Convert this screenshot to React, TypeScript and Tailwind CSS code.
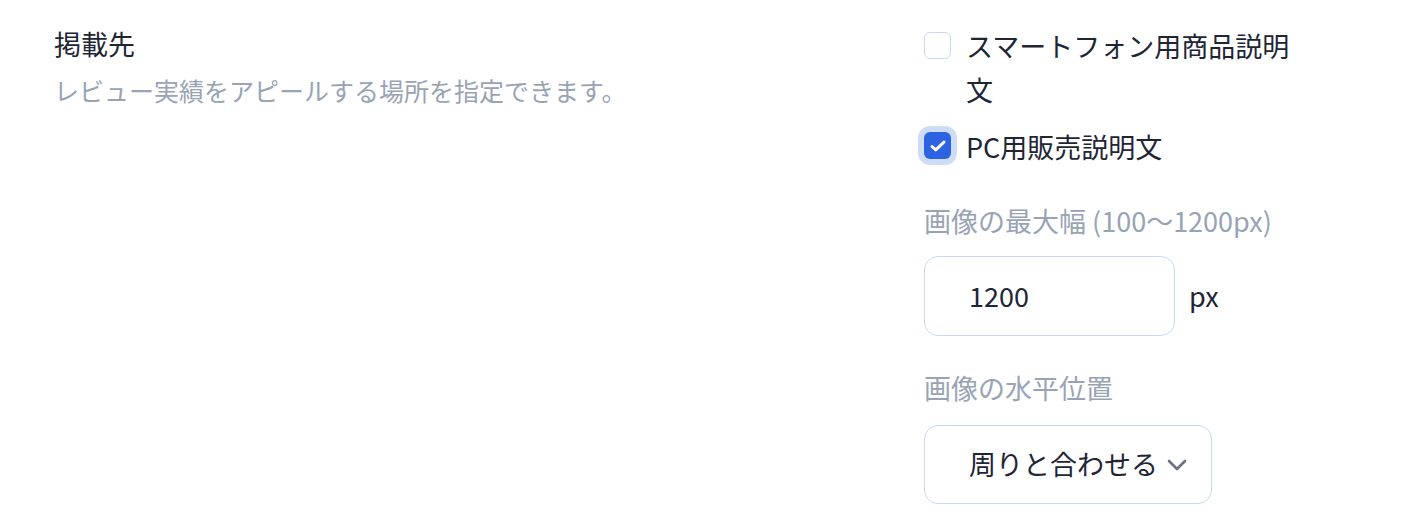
const font = { fontFamily: '"Noto Sans CJK JP", "Noto Sans", sans-serif' };

interface CheckRowProps {
    label: string;
    checked?: boolean;
}

const CheckRow: React.FC<CheckRowProps> = ({ label, checked }) => {
    return (
        <label className="flex items-start gap-[15px]">
            {checked ? (
                <span className="mt-[7px] flex h-[27px] w-[27px] shrink-0 items-center justify-center rounded-[6px] bg-[#2d62e3] ring-[6px] ring-[#cddcf7]">
                    <svg viewBox="0 0 18 18" className="h-[18px] w-[18px]" fill="none">
                        <path d="M3 9.5l3.8 3.4L15 5" stroke="white" strokeWidth="3" strokeLinecap="round" strokeLinejoin="round" />
                    </svg>
                </span>
            ) : (
                <span className="mt-[8px] h-[27px] w-[27px] shrink-0 rounded-[6px] border border-[#c3d9fb] bg-white" />
            )}
            <span className="text-[27px] leading-[44px] text-[#1e2535]">{label}</span>
        </label>
    );
};

export default function App() {
    return (
        <div className="flex min-h-[530px] bg-white pl-[54px] pt-[24px]" style={font}>
            <div className="w-[870px] shrink-0">
                <h3 className="text-[27px] leading-[40px] text-[#1e2535]">掲載先</h3>
                <p className="mt-[6px] text-[25px] leading-[40px] text-[#98a3b5]">
                    レビュー実績をアピールする場所を指定できます。
                </p>
            </div>
            <div className="w-[381px] shrink-0">
                <div className="flex flex-col gap-[13px]">
                    <CheckRow label="スマートフォン用商品説明文" />
                    <CheckRow label="PC用販売説明文" checked />
                </div>

                <p className="mt-[30px] text-[27px] leading-[44px] text-[#98a3b5]">画像の最大幅 (100〜1200px)</p>
                <div className="mt-[13px] flex items-center gap-[14px]">
                    <div className="flex h-[80px] w-[251px] items-center rounded-[14px] border border-[#c3d9fb] pl-[44px] text-[27px] text-[#1e2535]">
                        1200
                    </div>
                    <span className="text-[27px] text-[#1e2535]">px</span>
                </div>

                <p className="mt-[30px] text-[27px] leading-[44px] text-[#98a3b5]">画像の水平位置</p>
                <div className="mt-[15px] flex h-[79px] w-[288px] items-center gap-[9px] rounded-[14px] border border-[#c3d9fb] pl-[44px] text-[27px] text-[#1e2535]">
                    <span>周りと合わせる</span>
                    <svg viewBox="0 0 20 12" className="h-[12px] w-[20px]" fill="none">
                        <path d="M2 2l8 8 8-8" stroke="#6b7280" strokeWidth="2.6" strokeLinecap="round" strokeLinejoin="round" />
                    </svg>
                </div>
            </div>
        </div>
    );
}
